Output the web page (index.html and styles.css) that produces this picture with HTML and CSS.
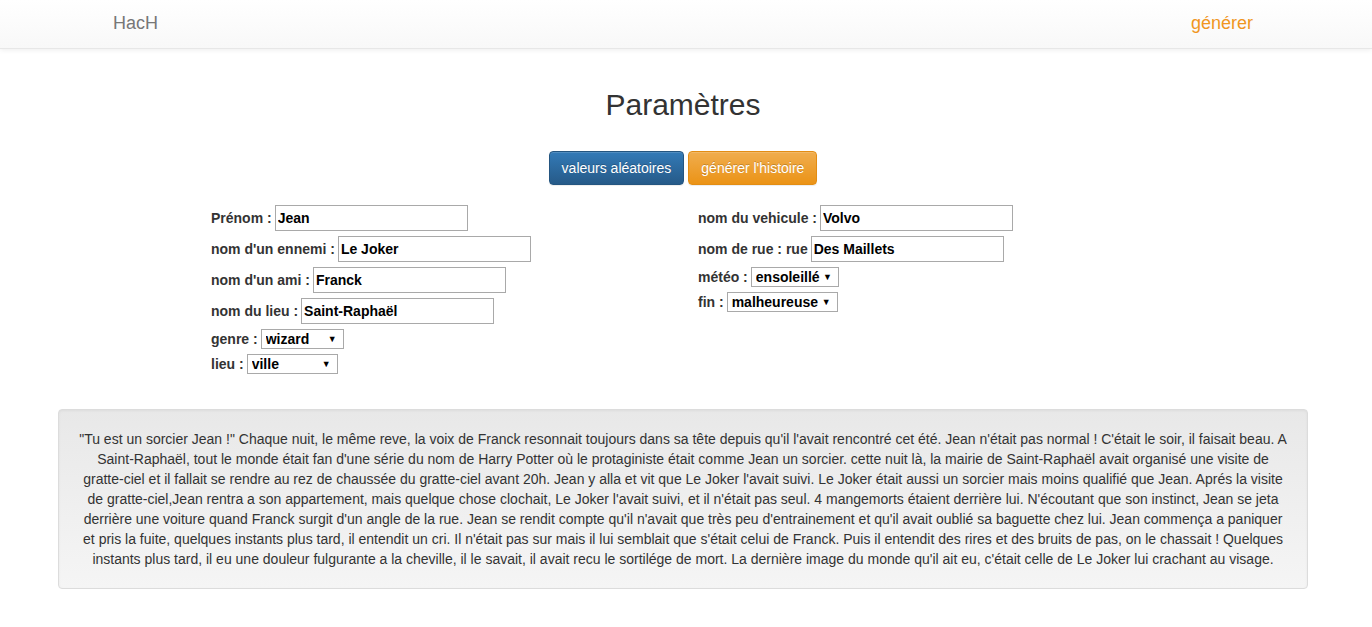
FILE: index.html
```html
<!DOCTYPE html>
<html lang="fr">
<head>
<meta charset="utf-8">
<title>HacH</title>
<link rel="stylesheet" href="styles.css">
</head>
<body>
<nav class="navbar">
  <a class="brand" href="#">HacH</a>
  <a class="nav-link" href="#">générer</a>
</nav>
<main>
  <h1 class="title">Paramètres</h1>
  <div class="actions">
    <button class="btn btn-primary">valeurs aléatoires</button>
    <button class="btn btn-warning">générer l'histoire</button>
  </div>
  <div class="form">
    <div class="col col-left">
      <div class="field"><label>Prénom : <input class="txt" type="text" value="Jean"></label></div>
      <div class="field"><label>nom d'un ennemi : <input class="txt" type="text" value="Le Joker"></label></div>
      <div class="field"><label>nom d'un ami : <input class="txt" type="text" value="Franck"></label></div>
      <div class="field"><label>nom du lieu : <input class="txt" type="text" value="Saint-Raphaël"></label></div>
      <div class="field sel"><label>genre : <span class="sel-wrap"><select class="select w-genre"><option>wizard</option></select></span></label></div>
      <div class="field sel"><label>lieu : <span class="sel-wrap"><select class="select w-lieu"><option>ville</option></select></span></label></div>
    </div>
    <div class="col col-right">
      <div class="field"><label>nom du vehicule : <input class="txt" type="text" value="Volvo"></label></div>
      <div class="field"><label>nom de rue : rue <input class="txt" type="text" value="Des Maillets"></label></div>
      <div class="field sel"><label>météo : <span class="sel-wrap"><select class="select w-meteo"><option>ensoleillé</option></select></span></label></div>
      <div class="field sel"><label>fin : <span class="sel-wrap"><select class="select w-fin"><option>malheureuse</option></select></span></label></div>
    </div>
  </div>
  <div class="well">"Tu est un sorcier Jean !" Chaque nuit, le même reve, la voix de Franck resonnait toujours dans sa tête depuis qu'il l'avait rencontré cet été. Jean n'était pas normal ! C'était le soir, il faisait beau. A Saint-Raphaël, tout le monde était fan d'une série du nom de Harry Potter où le protaginiste était comme Jean un sorcier. cette nuit là, la mairie de Saint-Raphaël avait organisé une visite de gratte-ciel et il fallait se rendre au rez de chaussée du gratte-ciel avant 20h. Jean y alla et vit que Le Joker l'avait suivi. Le Joker était aussi un sorcier mais moins qualifié que Jean. Aprés la visite de gratte-ciel,Jean rentra a son appartement, mais quelque chose clochait, Le Joker l'avait suivi, et il n'était pas seul. 4 mangemorts étaient derrière lui. N'écoutant que son instinct, Jean se jeta derrière une voiture quand Franck surgit d'un angle de la rue. Jean se rendit compte qu'il n'avait que très peu d'entrainement et qu'il avait oublié sa baguette chez lui. Jean commença a paniquer et pris la fuite, quelques instants plus tard, il entendit un cri. Il n'était pas sur mais il lui semblait que s'était celui de Franck. Puis il entendit des rires et des bruits de pas, on le chassait ! Quelques instants plus tard, il eu une douleur fulgurante a la cheville, il le savait, il avait recu le sortilége de mort. La dernière image du monde qu'il ait eu, c'était celle de Le Joker lui crachant au visage.</div>
</main>
</body>
</html>
```
FILE: styles.css
```css
* { box-sizing: border-box; }
html, body { margin: 0; padding: 0; }
body {
  font-family: "Liberation Sans", Arial, sans-serif;
  font-size: 14px;
  line-height: 20px;
  color: #333;
  background: #fff;
}
.navbar {
  height: 49px;
  display: flex;
  align-items: center;
  justify-content: space-between;
  padding: 0 119px 0 113px;
  background: linear-gradient(to bottom, #fff 0, #f8f8f8 100%);
  border-bottom: 1px solid #e7e7e7;
  box-shadow: inset 0 1px 0 rgba(255,255,255,.15), 0 1px 5px rgba(0,0,0,.075);
}
.brand, .nav-link {
  font-size: 18px;
  line-height: 20px;
  text-decoration: none;
  padding-bottom: 2px;
}
.brand { color: #777; }
.nav-link { color: #f0961e; }
.title {
  margin: 36px 0 0;
  padding-right: 6px;
  text-align: center;
  font-size: 30px;
  font-weight: 500;
  line-height: 40px;
  color: #333;
}
.actions {
  margin-top: 26px;
  display: flex;
  justify-content: center;
  gap: 4px;
  padding-right: 6px;
}
.btn {
  font-family: inherit;
  font-size: 14px;
  line-height: 20px;
  padding: 6px 12px;
  border-radius: 4px;
  border: 1px solid transparent;
  color: #fff;
  text-shadow: 0 -1px 0 rgba(0,0,0,.2);
  box-shadow: inset 0 1px 0 rgba(255,255,255,.15), 0 1px 1px rgba(0,0,0,.075);
  cursor: pointer;
}
.btn-primary {
  background: linear-gradient(to bottom, #337ab7 0, #265a88 100%);
  border-color: #245580;
}
.btn-warning {
  background: linear-gradient(to bottom, #f0ad4e 0, #eb9316 100%);
  border-color: #e38d13;
}
.form {
  display: flex;
  margin-top: 20px;
  padding-left: 211px;
}
.col-left { width: 487px; }
.field { margin-bottom: 5px; height: 26px; display: flex; align-items: center; }
.field.sel { height: 20px; }
label {
  font-weight: 700;
  color: #333;
  white-space: nowrap;
  display: flex;
  align-items: center;
  gap: 3px;
}
.txt {
  width: 193px;
  height: 26px;
  padding: 1px 2px;
  border: 1px solid #a9a9a9;
  font-family: inherit;
  font-size: 14px;
  font-weight: 700;
  color: #000;
  background: #fff;
  margin: 0;
}
.sel-wrap {
  position: relative;
  display: inline-block;
  height: 20px;
}
.sel-wrap::after {
  content: "\25BC";
  position: absolute;
  right: 7px;
  top: 5px;
  font-size: 9px;
  line-height: 10px;
  color: #000;
  pointer-events: none;
}
.select {
  -webkit-appearance: none;
  appearance: none;
  display: block;
  height: 20px;
  margin: 0;
  font-family: inherit;
  font-size: 14px;
  font-weight: 700;
  line-height: 18px;
  color: #000;
  border: 1px solid #a9a9a9;
  border-radius: 0;
  background: #fff;
  padding: 0 0 0 4px;
}
.w-genre { width: 83px; }
.w-lieu { width: 91px; }
.w-meteo { width: 88px; }
.w-fin { width: 111px; }
.well {
  margin: 30px 64px 20px 58px;
  padding: 19px;
  background: linear-gradient(to bottom, #e8e8e8 0, #f5f5f5 100%);
  border: 1px solid #dcdcdc;
  border-radius: 4px;
  box-shadow: inset 0 1px 3px rgba(0,0,0,.05), 0 1px 0 rgba(255,255,255,.1);
  text-align: center;
  color: #333;
}
```
